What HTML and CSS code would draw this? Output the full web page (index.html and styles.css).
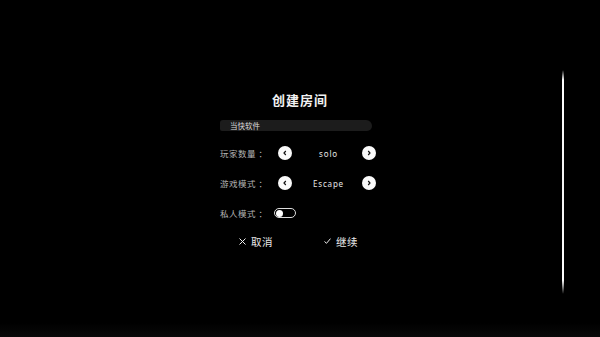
FILE: index.html
```html
<!DOCTYPE html>
<html>
	<head>
		<meta charset="UTF-8">
		<title>创建房间</title>
		<link rel="stylesheet" href="styles.css">
	</head>
	<body>
		<div class="page">
			<div class="panel">
				<div class="title">创建房间</div>
				<div class="name">当快软件</div>
				<div class="row">
					<span class="label">玩家数量 ：</span>
					<span class="arrow">
						<svg width="6" height="6" viewBox="0 0 6 6"><path d="M3.8 1 L2 3 L3.8 5" fill="none" stroke="#111" stroke-width="1.2"/></svg>
					</span>
					<span class="value">solo</span>
					<span class="arrow">
						<svg width="6" height="6" viewBox="0 0 6 6"><path d="M2.2 1 L4 3 L2.2 5" fill="none" stroke="#111" stroke-width="1.2"/></svg>
					</span>
				</div>
				<div class="row row2">
					<span class="label">游戏模式 ：</span>
					<span class="arrow">
						<svg width="6" height="6" viewBox="0 0 6 6"><path d="M3.8 1 L2 3 L3.8 5" fill="none" stroke="#111" stroke-width="1.2"/></svg>
					</span>
					<span class="value">Escape</span>
					<span class="arrow">
						<svg width="6" height="6" viewBox="0 0 6 6"><path d="M2.2 1 L4 3 L2.2 5" fill="none" stroke="#111" stroke-width="1.2"/></svg>
					</span>
				</div>
				<div class="row row3">
					<span class="label short">私人模式 ：</span>
					<span class="toggle"><span class="knob"></span></span>
				</div>
				<div class="actions">
					<span class="btn">
						<svg width="7" height="7" viewBox="0 0 7 7"><path d="M0.5 0.5 L6.5 6.5 M6.5 0.5 L0.5 6.5" stroke="#eee" stroke-width="1"/></svg>
						取消
					</span>
					<span class="btn">
						<svg width="7" height="6" viewBox="0 0 7 6"><path d="M0.5 3.5 L2.5 5.3 L6.5 0.6" fill="none" stroke="#eee" stroke-width="1"/></svg>
						继续
					</span>
				</div>
			</div>
			<div class="rail"></div>
		</div>
	</body>
</html>
```

FILE: styles.css
```css
*{
	margin: 0;
	padding: 0;
	box-sizing: border-box;
}
body{
	background: #000;
	width: 600px;
	height: 337px;
	overflow: hidden;
	font-family: "Noto Sans CJK SC", "Noto Sans", sans-serif;
	color: #eee;
}
.page{
	display: flex;
	height: 337px;
	background: linear-gradient(to top, #090909 0, #040404 8px, #000 14px);
}
.panel{
	margin-left: 220px;
	width: 160px;
	padding-top: 92px;
}
.title{
	height: 16px;
	line-height: 16px;
	font-size: 13px;
	font-weight: bold;
	text-align: center;
	letter-spacing: 1px;
	color: #f2f2f2;
}
.name{
	margin-top: 12px;
	width: 152px;
	height: 11px;
	line-height: 11px;
	padding-left: 10px;
	font-size: 7.5px;
	color: #ddd;
	background: #1c1c1c;
	border-radius: 3px 6px 5px 2px;
}
.row{
	display: flex;
	align-items: center;
	height: 14px;
	margin-top: 15px;
}
.row2{
	margin-top: 16px;
}
.row3{
	margin-top: 16px;
}
.label{
	width: 58px;
	font-size: 8.5px;
	color: #b4b4b4;
	letter-spacing: 0.5px;
	white-space: nowrap;
}
.short{
	width: 54px;
}
.arrow{
	width: 14px;
	height: 14px;
	border-radius: 50%;
	background: #fafafa;
	display: flex;
	align-items: center;
	justify-content: center;
}
.value{
	width: 70px;
	padding-left: 3px;
	text-align: center;
	font-family: "Noto Sans", sans-serif;
	font-size: 8px;
	letter-spacing: 0.8px;
	color: #e6e6e6;
}
.toggle{
	width: 22px;
	height: 10px;
	border: 1px solid #ddd;
	border-radius: 5px;
	display: flex;
	align-items: center;
	padding-left: 1px;
}
.knob{
	width: 7px;
	height: 7px;
	border-radius: 50%;
	background: #fff;
}
.actions{
	display: flex;
	align-items: center;
	height: 14px;
	margin-top: 14px;
	padding-left: 19px;
	gap: 51px;
}
.btn{
	display: flex;
	align-items: center;
	gap: 5px;
	font-size: 10.5px;
	color: #e8e8e8;
	letter-spacing: 0.5px;
}
.rail{
	margin-left: 182px;
	margin-top: 70px;
	width: 2px;
	height: 224px;
	background: linear-gradient(to bottom, #000 0, #fff 10px, #f4f4f4 50%, #fff 210px, #000 100%);
	border-radius: 1px;
}
```
